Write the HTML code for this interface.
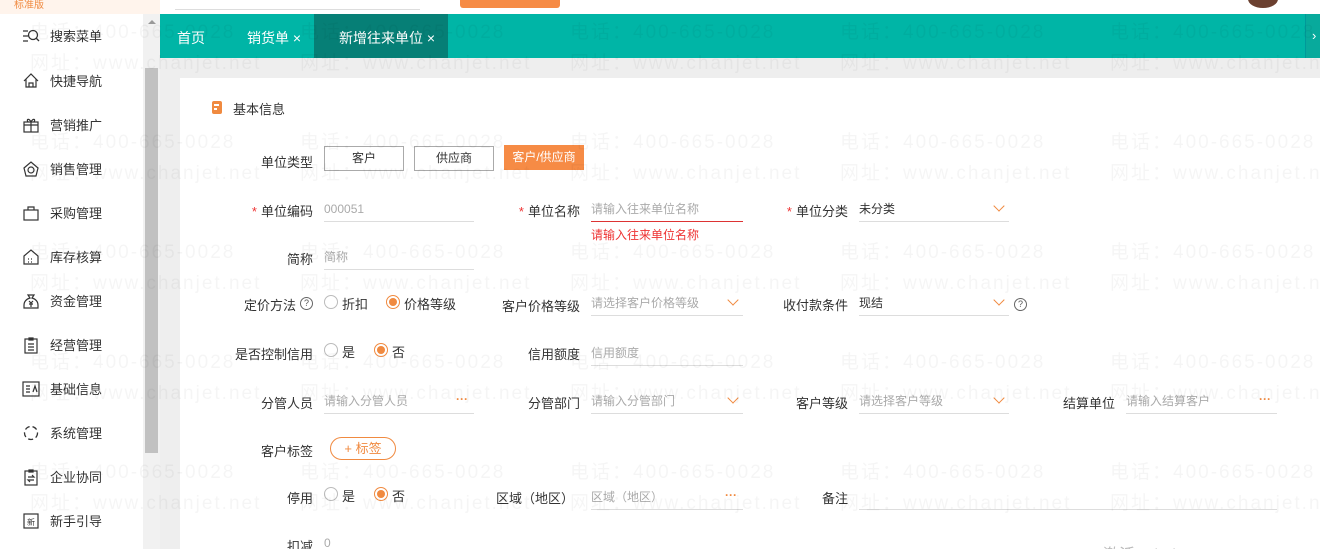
<!DOCTYPE html>
<html><head><meta charset="utf-8"><style>
*{margin:0;padding:0;box-sizing:border-box}
html,body{width:1320px;height:549px;overflow:hidden}
body{background:#fff;font-family:"Liberation Sans","Noto Sans CJK SC",sans-serif;font-size:12px;color:#333;position:relative}
.a{position:absolute}
.wm{position:absolute;font-size:19px;color:rgba(0,0,0,0.04);white-space:nowrap;letter-spacing:2px;z-index:50;pointer-events:none}
.nav{position:absolute;left:22px;font-size:13px;color:#333;display:flex;align-items:center}
.nav svg{width:18px;height:18px;margin-right:10px}
.lbl{position:absolute;text-align:right;font-size:13px;color:#333;width:120px}
.inp{position:absolute;height:24px;border-bottom:1px solid #ddd;font-size:12px;color:#aaa;line-height:22px}
.req{color:#e33;margin-right:4px}
.chev{position:absolute;right:6px;top:4px;width:8px;height:8px;border-right:1.3px solid #f08a40;border-bottom:1.3px solid #f08a40;transform:rotate(45deg)}
.dots{position:absolute;right:6px;top:-2px;color:#f08a40;font-size:12px;font-weight:bold}
.rad{position:absolute;width:14px;height:14px;border:1px solid #bbb;border-radius:50%}
.rad.on{border-color:#f08a40}
.rad.on::after{content:"";position:absolute;left:2px;top:2px;width:8px;height:8px;border-radius:50%;background:#f08a40}
.q{position:absolute;width:13px;height:13px;border:1px solid #666;border-radius:50%;font-size:9px;line-height:11px;text-align:center;color:#555}
.t{position:absolute;font-size:13px}
</style></head><body>
<div class="a" style="left:0;top:0;width:160px;height:14px;background:#fff4ec"></div>
<div class="a" style="left:14px;top:-4px;font-size:10px;color:#f08a40">标准版</div>
<div class="a" style="left:175px;top:9px;width:245px;height:1px;background:#ddd"></div>
<div class="a" style="left:460px;top:0;width:100px;height:8px;background:#f68b45;border-radius:0 0 3px 3px"></div>
<div class="a" style="left:1248px;top:-10px;width:30px;height:18px;border-radius:50%;background:#6b4030"></div>
<div class="a" style="left:143px;top:14px;width:17px;height:535px;background:#f1f1f1"></div>
<div class="a" style="left:145px;top:68px;width:13px;height:385px;background:#c1c1c1"></div>
<div class="a" style="left:148px;top:20px;width:0;height:0;border-left:4px solid transparent;border-right:4px solid transparent;border-bottom:4px solid #999"></div>
<div class="a" style="left:160px;top:58px;width:20px;height:491px;background:#eeeeee"></div>
<div class="a" style="left:160px;top:58px;width:1160px;height:20px;background:#eeeeee"></div>

<div class="nav" style="top:26px"><svg viewBox="0 0 18 18" fill="none" stroke="#333" stroke-width="1.3"><path d="M1 4h5M1 9h5M1 14h5"/><circle cx="11" cy="8" r="4.5"/><path d="M14 11l3 3"/></svg>搜索菜单</div>
<div class="nav" style="top:71px"><svg viewBox="0 0 18 18" fill="none" stroke="#333" stroke-width="1.2"><path d="M2 9L9 2l7 7M4 7v8h10V7M7 15v-4h4v4"/></svg>快捷导航</div>
<div class="nav" style="top:115px"><svg viewBox="0 0 18 18" fill="none" stroke="#333" stroke-width="1.2"><rect x="2" y="6" width="14" height="10"/><path d="M2 9h14M9 6v10M9 6C7 2 4 3 6 6M9 6c2-4 5-3 3 0"/></svg>营销推广</div>
<div class="nav" style="top:159px"><svg viewBox="0 0 18 18" fill="none" stroke="#333" stroke-width="1.2"><path d="M2 8l7-6 7 6-2 8H4z"/><circle cx="9" cy="10" r="3"/></svg>销售管理</div>
<div class="nav" style="top:203px"><svg viewBox="0 0 18 18" fill="none" stroke="#333" stroke-width="1.2"><rect x="2" y="6" width="14" height="10"/><path d="M6 6V3h6v3"/></svg>采购管理</div>
<div class="nav" style="top:247px"><svg viewBox="0 0 18 18" fill="none" stroke="#333" stroke-width="1.2"><path d="M2 8l7-6 7 6v8H2z"/><path d="M6 11h1M9 11h1M6 14h1M9 14h1"/></svg>库存核算</div>
<div class="nav" style="top:291px"><svg viewBox="0 0 18 18" fill="none" stroke="#333" stroke-width="1.2"><path d="M6 3h6l-2 3c4 1 6 4 6 7v3H2v-3c0-3 2-6 6-7z"/><path d="M7 9l2 2 2-2M9 11v4M7 12h4"/></svg>资金管理</div>
<div class="nav" style="top:335px"><svg viewBox="0 0 18 18" fill="none" stroke="#333" stroke-width="1.2"><rect x="3" y="3" width="12" height="14"/><path d="M7 2h4v2H7zM6 8h6M6 11h6M6 14h6"/></svg>经营管理</div>
<div class="nav" style="top:379px"><svg viewBox="0 0 18 18" fill="none" stroke="#333" stroke-width="1.2"><rect x="1" y="2" width="16" height="14"/><path d="M4 6h4M4 9h4M4 12h4M11 12l2-6 2 6"/></svg>基础信息</div>
<div class="nav" style="top:423px"><svg viewBox="0 0 18 18" fill="none" stroke="#333" stroke-width="1.3" stroke-dasharray="5 3"><circle cx="9" cy="9" r="6.5"/></svg>系统管理</div>
<div class="nav" style="top:467px"><svg viewBox="0 0 18 18" fill="none" stroke="#333" stroke-width="1.2"><rect x="3" y="3" width="12" height="14"/><path d="M7 2h4v2H7zM6 9h6l-2-2M12 12H6l2 2"/></svg>企业协同</div>
<div class="nav" style="top:511px"><svg viewBox="0 0 18 18" fill="none" stroke="#333" stroke-width="1.2"><rect x="2" y="2" width="14" height="14"/><text x="5" y="13" font-size="8" fill="#333" stroke="none">新</text></svg>新手引导</div>

<div class="a" style="left:160px;top:14px;width:1160px;height:44px;background:#00b5a6"></div>
<div class="a" style="left:314px;top:14px;width:134px;height:44px;background:#067f76"></div>
<div class="a" style="left:1305px;top:14px;width:15px;height:44px;background:#08aa9c;border-left:1px solid #099"></div>
<div class="a" style="left:1312px;top:28px;color:#fff;font-size:13px">›</div>
<div class="a" style="left:177px;top:28px;color:#fff;font-size:14px">首页</div>
<div class="a" style="left:247px;top:28px;color:#fff;font-size:14px">销货单 <span style="font-size:14px">×</span></div>
<div class="a" style="left:339px;top:28px;color:#fff;font-size:14px">新增往来单位 <span style="font-size:14px">×</span></div>

<div class="a" style="left:212px;top:101px;width:10px;height:13px;background:#f08a40;border-radius:2px"></div>
<div class="a" style="left:214px;top:104px;width:5px;height:1.5px;background:#fff"></div>
<div class="a" style="left:214px;top:108px;width:3px;height:1.5px;background:#fff"></div>
<div class="a" style="left:233px;top:99px;font-size:13px">基本信息</div>

<div class="lbl" style="left:193px;top:152px">单位类型</div>
<div class="a" style="left:324px;top:146px;width:80px;height:25px;border:1px solid #aaa;text-align:center;line-height:23px">客户</div>
<div class="a" style="left:414px;top:146px;width:80px;height:25px;border:1px solid #aaa;text-align:center;line-height:23px">供应商</div>
<div class="a" style="left:504px;top:145px;width:80px;height:25px;background:#f68b45;color:#fff;text-align:center;line-height:25px">客户/供应商</div>

<div class="lbl" style="left:193px;top:201px"><span class="req">*</span>单位编码</div>
<div class="inp" style="left:324px;top:198px;width:150px">000051</div>
<div class="lbl" style="left:460px;top:201px"><span class="req">*</span>单位名称</div>
<div class="inp" style="left:591px;top:198px;width:152px;border-bottom-color:#d33">请输入往来单位名称</div>
<div class="a" style="left:591px;top:226px;color:#e33">请输入往来单位名称</div>
<div class="lbl" style="left:728px;top:201px"><span class="req">*</span>单位分类</div>
<div class="inp" style="left:859px;top:198px;width:150px;color:#333">未分类<i class="chev"></i></div>

<div class="lbl" style="left:193px;top:249px">简称</div>
<div class="inp" style="left:324px;top:246px;width:150px">简称</div>

<div class="lbl" style="left:176px;top:295px">定价方法</div>
<div class="q" style="left:300px;top:297px">?</div>
<div class="rad" style="left:324px;top:295px"></div><div class="t" style="left:342px;top:294px">折扣</div>
<div class="rad on" style="left:386px;top:295px"></div><div class="t" style="left:404px;top:294px">价格等级</div>
<div class="lbl" style="left:460px;top:296px">客户价格等级</div>
<div class="inp" style="left:591px;top:292px;width:152px">请选择客户价格等级<i class="chev"></i></div>
<div class="lbl" style="left:728px;top:295px">收付款条件</div>
<div class="inp" style="left:859px;top:292px;width:150px;color:#333">现结<i class="chev"></i></div>
<div class="q" style="left:1014px;top:298px">?</div>

<div class="lbl" style="left:193px;top:344px">是否控制信用</div>
<div class="rad" style="left:324px;top:343px"></div><div class="t" style="left:342px;top:342px">是</div>
<div class="rad on" style="left:374px;top:343px"></div><div class="t" style="left:392px;top:342px">否</div>
<div class="lbl" style="left:460px;top:344px">信用额度</div>
<div class="inp" style="left:591px;top:342px;width:152px">信用额度</div>

<div class="lbl" style="left:193px;top:393px">分管人员</div>
<div class="inp" style="left:324px;top:390px;width:150px">请输入分管人员<span class="dots">···</span></div>
<div class="lbl" style="left:460px;top:393px">分管部门</div>
<div class="inp" style="left:591px;top:390px;width:152px">请输入分管部门<i class="chev"></i></div>
<div class="lbl" style="left:728px;top:393px">客户等级</div>
<div class="inp" style="left:859px;top:390px;width:150px">请选择客户等级<i class="chev"></i></div>
<div class="lbl" style="left:995px;top:393px">结算单位</div>
<div class="inp" style="left:1126px;top:390px;width:151px">请输入结算客户<span class="dots">···</span></div>

<div class="lbl" style="left:193px;top:441px">客户标签</div>
<div class="a" style="left:330px;top:437px;width:66px;height:23px;border:1px solid #f08a40;border-radius:12px;color:#f08a40;text-align:center;line-height:21px;font-size:13px">+ 标签</div>

<div class="lbl" style="left:193px;top:488px">停用</div>
<div class="rad" style="left:324px;top:487px"></div><div class="t" style="left:342px;top:486px">是</div>
<div class="rad on" style="left:374px;top:487px"></div><div class="t" style="left:392px;top:486px">否</div>
<div class="lbl" style="left:454px;top:488px">区域（地区）</div>
<div class="inp" style="left:591px;top:486px;width:152px">区域（地区）<span class="dots">···</span></div>
<div class="lbl" style="left:728px;top:488px">备注</div>
<div class="inp" style="left:859px;top:486px;width:418px"></div>

<div class="lbl" style="left:193px;top:536px">扣减</div>
<div class="a" style="left:324px;top:536px;color:#aaa">0</div>
<div class="a" style="left:1103px;top:541px;color:#bbb;font-size:16px">激活 Windows</div>

<div class="wm" style="left:30px;top:17px">电话：400-665-0028</div><div class="wm" style="left:30px;top:48px">网址：www.chanjet.net</div>
<div class="wm" style="left:300px;top:17px">电话：400-665-0028</div><div class="wm" style="left:300px;top:48px">网址：www.chanjet.net</div>
<div class="wm" style="left:570px;top:17px">电话：400-665-0028</div><div class="wm" style="left:570px;top:48px">网址：www.chanjet.net</div>
<div class="wm" style="left:840px;top:17px">电话：400-665-0028</div><div class="wm" style="left:840px;top:48px">网址：www.chanjet.net</div>
<div class="wm" style="left:1110px;top:17px">电话：400-665-0028</div><div class="wm" style="left:1110px;top:48px">网址：www.chanjet.net</div>
<div class="wm" style="left:30px;top:127px">电话：400-665-0028</div><div class="wm" style="left:30px;top:158px">网址：www.chanjet.net</div>
<div class="wm" style="left:300px;top:127px">电话：400-665-0028</div><div class="wm" style="left:300px;top:158px">网址：www.chanjet.net</div>
<div class="wm" style="left:570px;top:127px">电话：400-665-0028</div><div class="wm" style="left:570px;top:158px">网址：www.chanjet.net</div>
<div class="wm" style="left:840px;top:127px">电话：400-665-0028</div><div class="wm" style="left:840px;top:158px">网址：www.chanjet.net</div>
<div class="wm" style="left:1110px;top:127px">电话：400-665-0028</div><div class="wm" style="left:1110px;top:158px">网址：www.chanjet.net</div>
<div class="wm" style="left:30px;top:237px">电话：400-665-0028</div><div class="wm" style="left:30px;top:268px">网址：www.chanjet.net</div>
<div class="wm" style="left:300px;top:237px">电话：400-665-0028</div><div class="wm" style="left:300px;top:268px">网址：www.chanjet.net</div>
<div class="wm" style="left:570px;top:237px">电话：400-665-0028</div><div class="wm" style="left:570px;top:268px">网址：www.chanjet.net</div>
<div class="wm" style="left:840px;top:237px">电话：400-665-0028</div><div class="wm" style="left:840px;top:268px">网址：www.chanjet.net</div>
<div class="wm" style="left:1110px;top:237px">电话：400-665-0028</div><div class="wm" style="left:1110px;top:268px">网址：www.chanjet.net</div>
<div class="wm" style="left:30px;top:347px">电话：400-665-0028</div><div class="wm" style="left:30px;top:378px">网址：www.chanjet.net</div>
<div class="wm" style="left:300px;top:347px">电话：400-665-0028</div><div class="wm" style="left:300px;top:378px">网址：www.chanjet.net</div>
<div class="wm" style="left:570px;top:347px">电话：400-665-0028</div><div class="wm" style="left:570px;top:378px">网址：www.chanjet.net</div>
<div class="wm" style="left:840px;top:347px">电话：400-665-0028</div><div class="wm" style="left:840px;top:378px">网址：www.chanjet.net</div>
<div class="wm" style="left:1110px;top:347px">电话：400-665-0028</div><div class="wm" style="left:1110px;top:378px">网址：www.chanjet.net</div>
<div class="wm" style="left:30px;top:457px">电话：400-665-0028</div><div class="wm" style="left:30px;top:488px">网址：www.chanjet.net</div>
<div class="wm" style="left:300px;top:457px">电话：400-665-0028</div><div class="wm" style="left:300px;top:488px">网址：www.chanjet.net</div>
<div class="wm" style="left:570px;top:457px">电话：400-665-0028</div><div class="wm" style="left:570px;top:488px">网址：www.chanjet.net</div>
<div class="wm" style="left:840px;top:457px">电话：400-665-0028</div><div class="wm" style="left:840px;top:488px">网址：www.chanjet.net</div>
<div class="wm" style="left:1110px;top:457px">电话：400-665-0028</div><div class="wm" style="left:1110px;top:488px">网址：www.chanjet.net</div>
</body></html>
